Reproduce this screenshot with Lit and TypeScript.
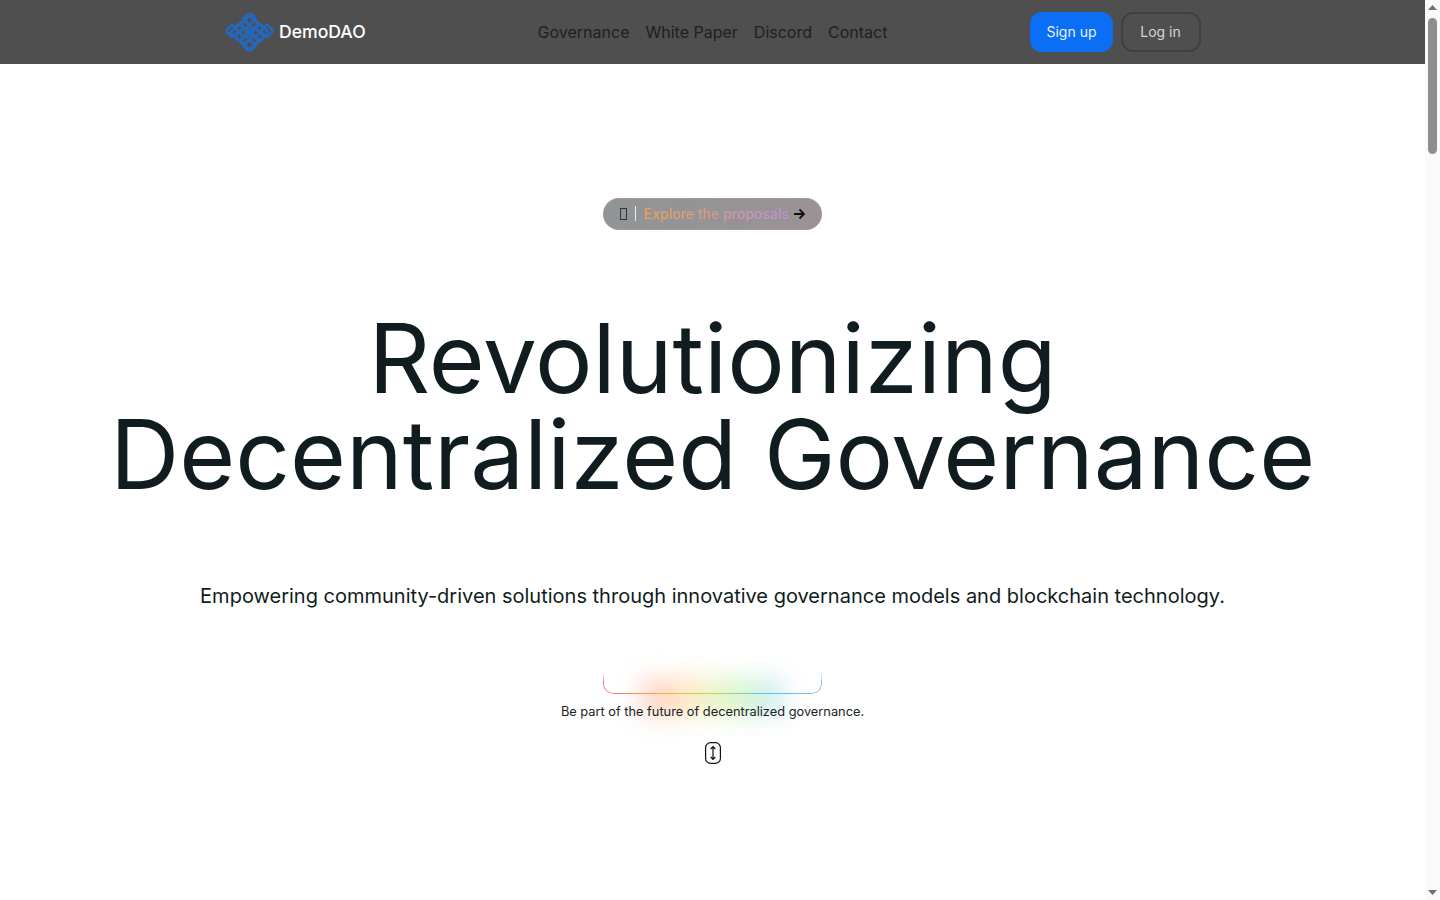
import { LitElement, html, css, svg } from "lit";
import { customElement } from "lit/decorators.js";

@customElement("app-root")
export class AppRoot extends LitElement {
  static styles = css`
    :host { display: grid; grid-template-columns: 1fr 15px; height: 100vh; overflow: hidden; font-family: Inter, "Noto Sans", sans-serif; color: #101a20; background: #fff; }
    .page { min-width: 0; }
    .bar { background: #4f4f4f; height: 64px; display: flex; justify-content: center; }
    .bar-in { width: 975px; display: grid; grid-template-columns: 1fr auto 1fr; align-items: center; }
    .brand { display: flex; align-items: center; gap: 4px; color: #fff; font-size: 17.6px; font-weight: 500; }
    .brand span { padding-bottom: 1px; }
    .logo { width: 51px; height: 39px; display: block; filter: blur(0.5px); margin-left: -1px; }
    .nav { display: flex; gap: 16px; font-size: 16px; color: #1b2125; }
    .acts { display: flex; justify-content: flex-end; gap: 8px; margin: -1px -1px 0 0; }
    .btn { height: 40px; box-sizing: border-box; border-radius: 12px; display: flex; align-items: center; justify-content: center; font-size: 14px; }
    .up { background: #0b6ff5; color: #e8f2ff; width: 83px; }
    .in { border: 2px solid #404040; color: #d6d6d6; width: 80px; padding-right: 1px; }
    .hero { display: flex; flex-direction: column; align-items: center; padding-top: 134px; }
    .pill { width: 219px; height: 32px; box-sizing: border-box; border-radius: 16px; background: linear-gradient(90deg, #909597, #9a9296); display: flex; align-items: center; padding-left: 17px; font-size: 14px; font-weight: 500; line-height: 30px; box-shadow: 0 0 0 1px rgba(200,170,130,.35) inset; }
    .tofu { width: 7px; height: 12px; box-sizing: border-box; border: 1px solid #333; margin-right: 8px; }
    .sep { width: 1px; height: 15px; background: #efefef; margin-right: 8px; margin-top: -2px; }
    .grad { background: linear-gradient(90deg, #f2a24e 0%, #d99a86 45%, #c090d8 100%); -webkit-background-clip: text; background-clip: text; color: transparent; }
    .arrow { width: 14px; height: 14px; margin-left: 3px; display: block; }
    h1 { margin: 80px 0 0; font-size: 96px; line-height: 96px; font-weight: 400; text-align: center; color: #101c20; }
    .lead { margin: 80px 0 0; font-size: 20px; line-height: 28px; color: #101c20; }
    .cta { position: relative; margin-top: 62px; width: 219px; height: 22px; }
    .glow { position: absolute; left: 40px; top: 8px; width: 140px; height: 34px; background: linear-gradient(90deg, #ff9a8a, #ffd98a, #b8f29a, #9ad8f8); filter: blur(13px); opacity: .6; }
    .ring { position: absolute; inset: 0; -webkit-mask: linear-gradient(transparent, #000 50%); mask: linear-gradient(transparent, #000 50%); }
    .ring::before { content: ""; position: absolute; inset: 0; box-sizing: border-box; border: 1px solid transparent; border-top: 0; border-radius: 0 0 10px 10px; background: linear-gradient(90deg, #e87a78, #f0a860, #b0e460, #60bcf0, #80bcf0) border-box; -webkit-mask: linear-gradient(#000 0 0) padding-box, linear-gradient(#000 0 0); -webkit-mask-composite: xor; mask-composite: exclude; }
    .note { position: relative; margin: 8px 0 0; font-size: 12.8px; line-height: 20px; color: #1a2226; }
    .mouse { width: 24px; height: 24px; display: block; margin-top: 19px; }
    .sb { background: #fafafa; display: flex; flex-direction: column; align-items: center; padding: 5px 0; box-sizing: border-box; height: 100vh; }
    .tri { width: 9px; height: 5px; display: block; fill: #6f6f6f; }
    .thumb { width: 9px; height: 136px; border-radius: 5px; background: #8e8e8e; margin-top: 8px; }
    .space { flex: 1; }
  `;

  private knot() {
    const loops = [[14,24],[24.5,16],[35,24],[24.5,32],[19,20],[30,20],[19,28],[30,28]];
    return html`<svg class="logo" viewBox="0 0 49 38" aria-hidden="true">
      <g fill="none" stroke="#2468bd" stroke-width="2.4">
        ${loops.map(([x, y]) => svg`<rect x=${x - 6} y=${y - 6 - 5} width="12" height="12" rx="2" transform="rotate(45 ${x} ${y - 5})"></rect>`)}
        <rect x="3" y="13" width="9" height="9" rx="2" transform="rotate(45 7.5 17.5)"></rect>
        <rect x="37" y="13" width="9" height="9" rx="2" transform="rotate(45 41.5 17.5)"></rect>
        <rect x="20" y="1" width="9" height="9" rx="2" transform="rotate(45 24.5 5.5)"></rect>
        <rect x="20" y="27" width="9" height="9" rx="2" transform="rotate(45 24.5 31.5)"></rect>
      </g></svg>`;
  }

  render() {
    return html`
      <div class="page">
      <header class="bar"><div class="bar-in">
        <div class="brand">${this.knot()}<span>DemoDAO</span></div>
        <nav class="nav"><span>Governance</span><span>White Paper</span><span>Discord</span><span>Contact</span></nav>
        <div class="acts"><div class="btn up">Sign up</div><div class="btn in">Log in</div></div>
      </div></header>
      <main class="hero">
        <div class="pill">
          <span class="tofu"></span><span class="sep"></span><span class="grad">Explore the proposals</span>
          <svg class="arrow" viewBox="0 0 14 14" fill="none" stroke="#111" stroke-width="1.8"><path d="M2 7h10M7.5 2.5 12 7l-4.5 4.5"/></svg>
        </div>
        <h1>Revolutionizing<br>Decentralized Governance</h1>
        <p class="lead">Empowering community-driven solutions through innovative governance models and blockchain technology.</p>
        <div class="cta"><div class="glow"></div><div class="ring"></div></div>
        <p class="note">Be part of the future of decentralized governance.</p>
        <svg class="mouse" viewBox="0 0 24 24" fill="none" stroke="#111" stroke-width="1.2"><rect x="4.6" y="1.6" width="14.8" height="20.8" rx="5"/><path d="M12 6v12M9.7 8 12 5.7 14.3 8M9.7 16l2.3 2.3 2.3-2.3"/></svg>
      </main>
      </div>
      <aside class="sb">
        <svg class="tri" viewBox="0 0 9 5"><path d="M4.5 0 9 5H0z"/></svg>
        <div class="thumb"></div><div class="space"></div>
        <svg class="tri" viewBox="0 0 9 5"><path d="M0 0h9L4.5 5z"/></svg>
      </aside>
    `;
  }
}
